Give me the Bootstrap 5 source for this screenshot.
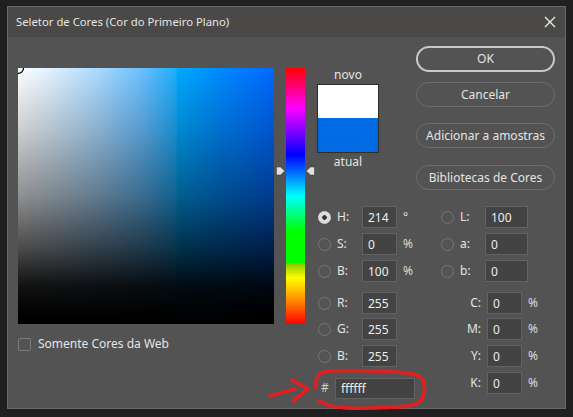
<!DOCTYPE html>
<html lang="pt">
<head>
<meta charset="utf-8">
<title>Seletor de Cores</title>
<link href="https://cdn.jsdelivr.net/npm/bootstrap@5.3.0/dist/css/bootstrap.min.css" rel="stylesheet">
<style>
html,body{height:417px;overflow:hidden}
body{background:#202020;color:#e4e4e4;font:12px/1.2 "Noto Sans",sans-serif;position:relative}
.ps-dialog{margin:6px 0 0 7px;width:559px;height:403px;background:#535353;border:1px solid #686868}
.ps-title{height:30px;background:#4a4947;padding:0 9px 0 8px}
.ps-title span{font-size:11.3px}
.ps-main{padding-left:10px;height:370px}
.ps-left{width:256px;padding-top:31px}
.ps-field{width:256px;height:256px;position:relative;background:linear-gradient(to bottom,rgba(0,0,0,0) 0%,rgba(0,0,0,.2) 25%,rgba(0,0,0,.44) 50%,rgba(0,0,0,.7) 70%,rgba(0,0,0,.93) 85%,#000 97%),linear-gradient(to right,#fff 0%,#e2f2ff 12%,#aedbff 30%,#6cc0ff 48%,#1eadfe 61.8%,#00aaff 62.2%,#0088ff 80%,#0068ff 100%)}
.ps-ring{position:absolute;left:0;top:0}
.ps-web{margin-top:13px;gap:7px}
.ps-check.form-check-input{width:13px;height:13px;margin:0;background:#535353;border:1px solid #7b7b7b;border-radius:2px;flex:none}
.ps-hue{width:19px;height:256px;margin:31px 0 0 12px;position:relative;background:linear-gradient(to bottom,#f00 0,#f0f 15.5%,#00f 34%,#0ff 50%,#0f0 64%,#0f0 76%,#8c0 76.5%,#ff0 82%,#f80 91%,#f00 100%)}
.ps-arrow{position:absolute;top:98px}
.ps-arrow.ps-a1{left:-10px}
.ps-arrow.ps-a2{right:-10px}
.ps-right{margin-left:12px;width:238px}
.ps-top{height:169px}
.ps-swatch-col{width:62px;padding-top:31px;text-align:center}
.ps-swatch{height:69px;border:1px solid #2e2e2e;margin:2px 0 2px;background:linear-gradient(to bottom,#fff 0,#fff 49%,#006be3 49%,#006be3 100%)}
.ps-buttons{width:139px;margin-left:37px;padding-top:9px}
.ps-btn.btn{display:block;width:100%;height:25px;padding:0;border-radius:13px;border:1px solid #6d6d6d;background:transparent;color:#e4e4e4;font-size:12px;line-height:23px}
.ps-btn.btn.ps-ok{border:2px solid #c9c9c9;height:26px;line-height:22px}
.ps-b2{margin-top:10px}
.ps-b3{margin-top:16px}
.ps-b4{margin-top:17px}
.ps-vals{margin-left:1px}
.ps-colA{width:123px}
.ps-line{height:22px;margin-bottom:5px}
.ps-sep{margin-top:10px;margin-bottom:4px}
.ps-radio.form-check-input{width:13px;height:13px;margin:0 6px 0 0;background:#535353;border:1px solid #767676;flex:none}
.ps-radio.form-check-input:checked{background:radial-gradient(circle,#333 0 2px,#dcdcdc 2.5px);border-color:#dcdcdc}
.ps-lab{width:25px}
.ps-spacer{width:19px}
.ps-right-lab{width:27px;text-align:right;padding-right:6px}
.ps-field-in.form-control{width:35px;height:22px;padding:0 0 0 5px;border-radius:0;background:#434343;border:1px solid #626262;color:#ededed;font:12px "Noto Sans",sans-serif;flex:none}
.ps-wide.form-control{width:43px}
.ps-unit{margin-left:6px;color:#dcdcdc}
.ps-hash{width:14px;margin-left:3px;color:#cfcfcf}
.ps-hex.form-control{width:80px;height:21px}
.ps-close{line-height:0}
.ps-ink{position:absolute;left:0;top:0;pointer-events:none}
</style>
</head>
<body>
<div class="ps-dialog">
  <div class="ps-title d-flex align-items-center justify-content-between">
    <span>Seletor de Cores (Cor do Primeiro Plano)</span>
    <span class="ps-close"><svg width="12" height="12" viewBox="0 0 12 12"><path d="M1 1L11 11M11 1L1 11" stroke="#f0f0f0" stroke-width="1.2" fill="none"/></svg></span>
  </div>
  <div class="ps-main d-flex">
    <div class="ps-left">
      <div class="ps-field">
        <svg class="ps-ring" width="8" height="8" viewBox="0 0 8 8"><path d="M5.5 0A5.5 5.5 0 0 1 0 5.5" stroke="#000" stroke-width="1.3" fill="none"/></svg>
      </div>
      <div class="ps-web d-flex align-items-center">
        <input class="form-check-input ps-check" type="checkbox" id="web">
        <label for="web">Somente Cores da Web</label>
      </div>
    </div>
    <div class="ps-hue">
      <svg class="ps-arrow ps-a1" width="9" height="10" viewBox="0 0 9 10"><path d="M.5 1H4.5L8.8 5L4.5 9H.5Z" fill="#e2e2e2" stroke="#333" stroke-width=".5"/></svg>
      <svg class="ps-arrow ps-a2" width="9" height="10" viewBox="0 0 9 10"><path d="M8.5 1H4.5L.2 5L4.5 9H8.5Z" fill="#e2e2e2" stroke="#333" stroke-width=".5"/></svg>
    </div>
    <div class="ps-right">
      <div class="ps-top d-flex">
        <div class="ps-swatch-col">
          <div>novo</div>
          <div class="ps-swatch"></div>
          <div>atual</div>
        </div>
        <div class="ps-buttons">
          <button class="btn ps-btn ps-ok" type="button">OK</button>
          <button class="btn ps-btn ps-b2" type="button">Cancelar</button>
          <button class="btn ps-btn ps-b3" type="button">Adicionar a amostras</button>
          <button class="btn ps-btn ps-b4" type="button">Bibliotecas de Cores</button>
        </div>
      </div>
      <div class="ps-vals d-flex">
        <div class="ps-colA">
          <div class="ps-line d-flex align-items-center"><input class="form-check-input ps-radio" type="radio" name="m" checked><span class="ps-lab">H:</span><input class="form-control ps-field-in" value="214"><span class="ps-unit">°</span></div>
          <div class="ps-line d-flex align-items-center"><input class="form-check-input ps-radio" type="radio" name="m"><span class="ps-lab">S:</span><input class="form-control ps-field-in" value="0"><span class="ps-unit">%</span></div>
          <div class="ps-line d-flex align-items-center"><input class="form-check-input ps-radio" type="radio" name="m"><span class="ps-lab">B:</span><input class="form-control ps-field-in" value="100"><span class="ps-unit">%</span></div>
          <div class="ps-line ps-sep d-flex align-items-center"><input class="form-check-input ps-radio" type="radio" name="m"><span class="ps-lab">R:</span><input class="form-control ps-field-in" value="255"></div>
          <div class="ps-line d-flex align-items-center"><input class="form-check-input ps-radio" type="radio" name="m"><span class="ps-lab">G:</span><input class="form-control ps-field-in" value="255"></div>
          <div class="ps-line d-flex align-items-center"><input class="form-check-input ps-radio" type="radio" name="m"><span class="ps-lab">B:</span><input class="form-control ps-field-in" value="255"></div>
          <div class="ps-line ps-sep d-flex align-items-center"><span class="ps-hash">#</span><input class="form-control ps-field-in ps-hex" value="ffffff"></div>
        </div>
        <div class="ps-colB">
          <div class="ps-line d-flex align-items-center"><input class="form-check-input ps-radio" type="radio" name="m"><span class="ps-lab">L:</span><input class="form-control ps-field-in ps-wide" value="100"></div>
          <div class="ps-line d-flex align-items-center"><input class="form-check-input ps-radio" type="radio" name="m"><span class="ps-lab">a:</span><input class="form-control ps-field-in ps-wide" value="0"></div>
          <div class="ps-line d-flex align-items-center"><input class="form-check-input ps-radio" type="radio" name="m"><span class="ps-lab">b:</span><input class="form-control ps-field-in ps-wide" value="0"></div>
          <div class="ps-line ps-sep d-flex align-items-center"><span class="ps-spacer"></span><span class="ps-right-lab">C:</span><input class="form-control ps-field-in" value="0"><span class="ps-unit">%</span></div>
          <div class="ps-line d-flex align-items-center"><span class="ps-spacer"></span><span class="ps-right-lab">M:</span><input class="form-control ps-field-in" value="0"><span class="ps-unit">%</span></div>
          <div class="ps-line d-flex align-items-center"><span class="ps-spacer"></span><span class="ps-right-lab">Y:</span><input class="form-control ps-field-in" value="0"><span class="ps-unit">%</span></div>
          <div class="ps-line d-flex align-items-center"><span class="ps-spacer"></span><span class="ps-right-lab">K:</span><input class="form-control ps-field-in" value="0"><span class="ps-unit">%</span></div>
        </div>
      </div>
    </div>
  </div>
</div>
<svg class="ps-ink" width="573" height="417" viewBox="0 0 573 417" fill="none" stroke="#e21f1f" stroke-width="3.6" stroke-linecap="round" stroke-linejoin="round">
  <path d="M316 388C315 377 318 372 330 371C350 370 380 371 395 372C410 373 420 374 423 380C426 388 425 398 418 403C410 407 395 407 370 408C350 409 335 407 328 405C323 403 320 402 319 401"/>
  <path d="M270 396L295 389M292 380L308 389L293 401"/>
</svg>
</body>
</html>
